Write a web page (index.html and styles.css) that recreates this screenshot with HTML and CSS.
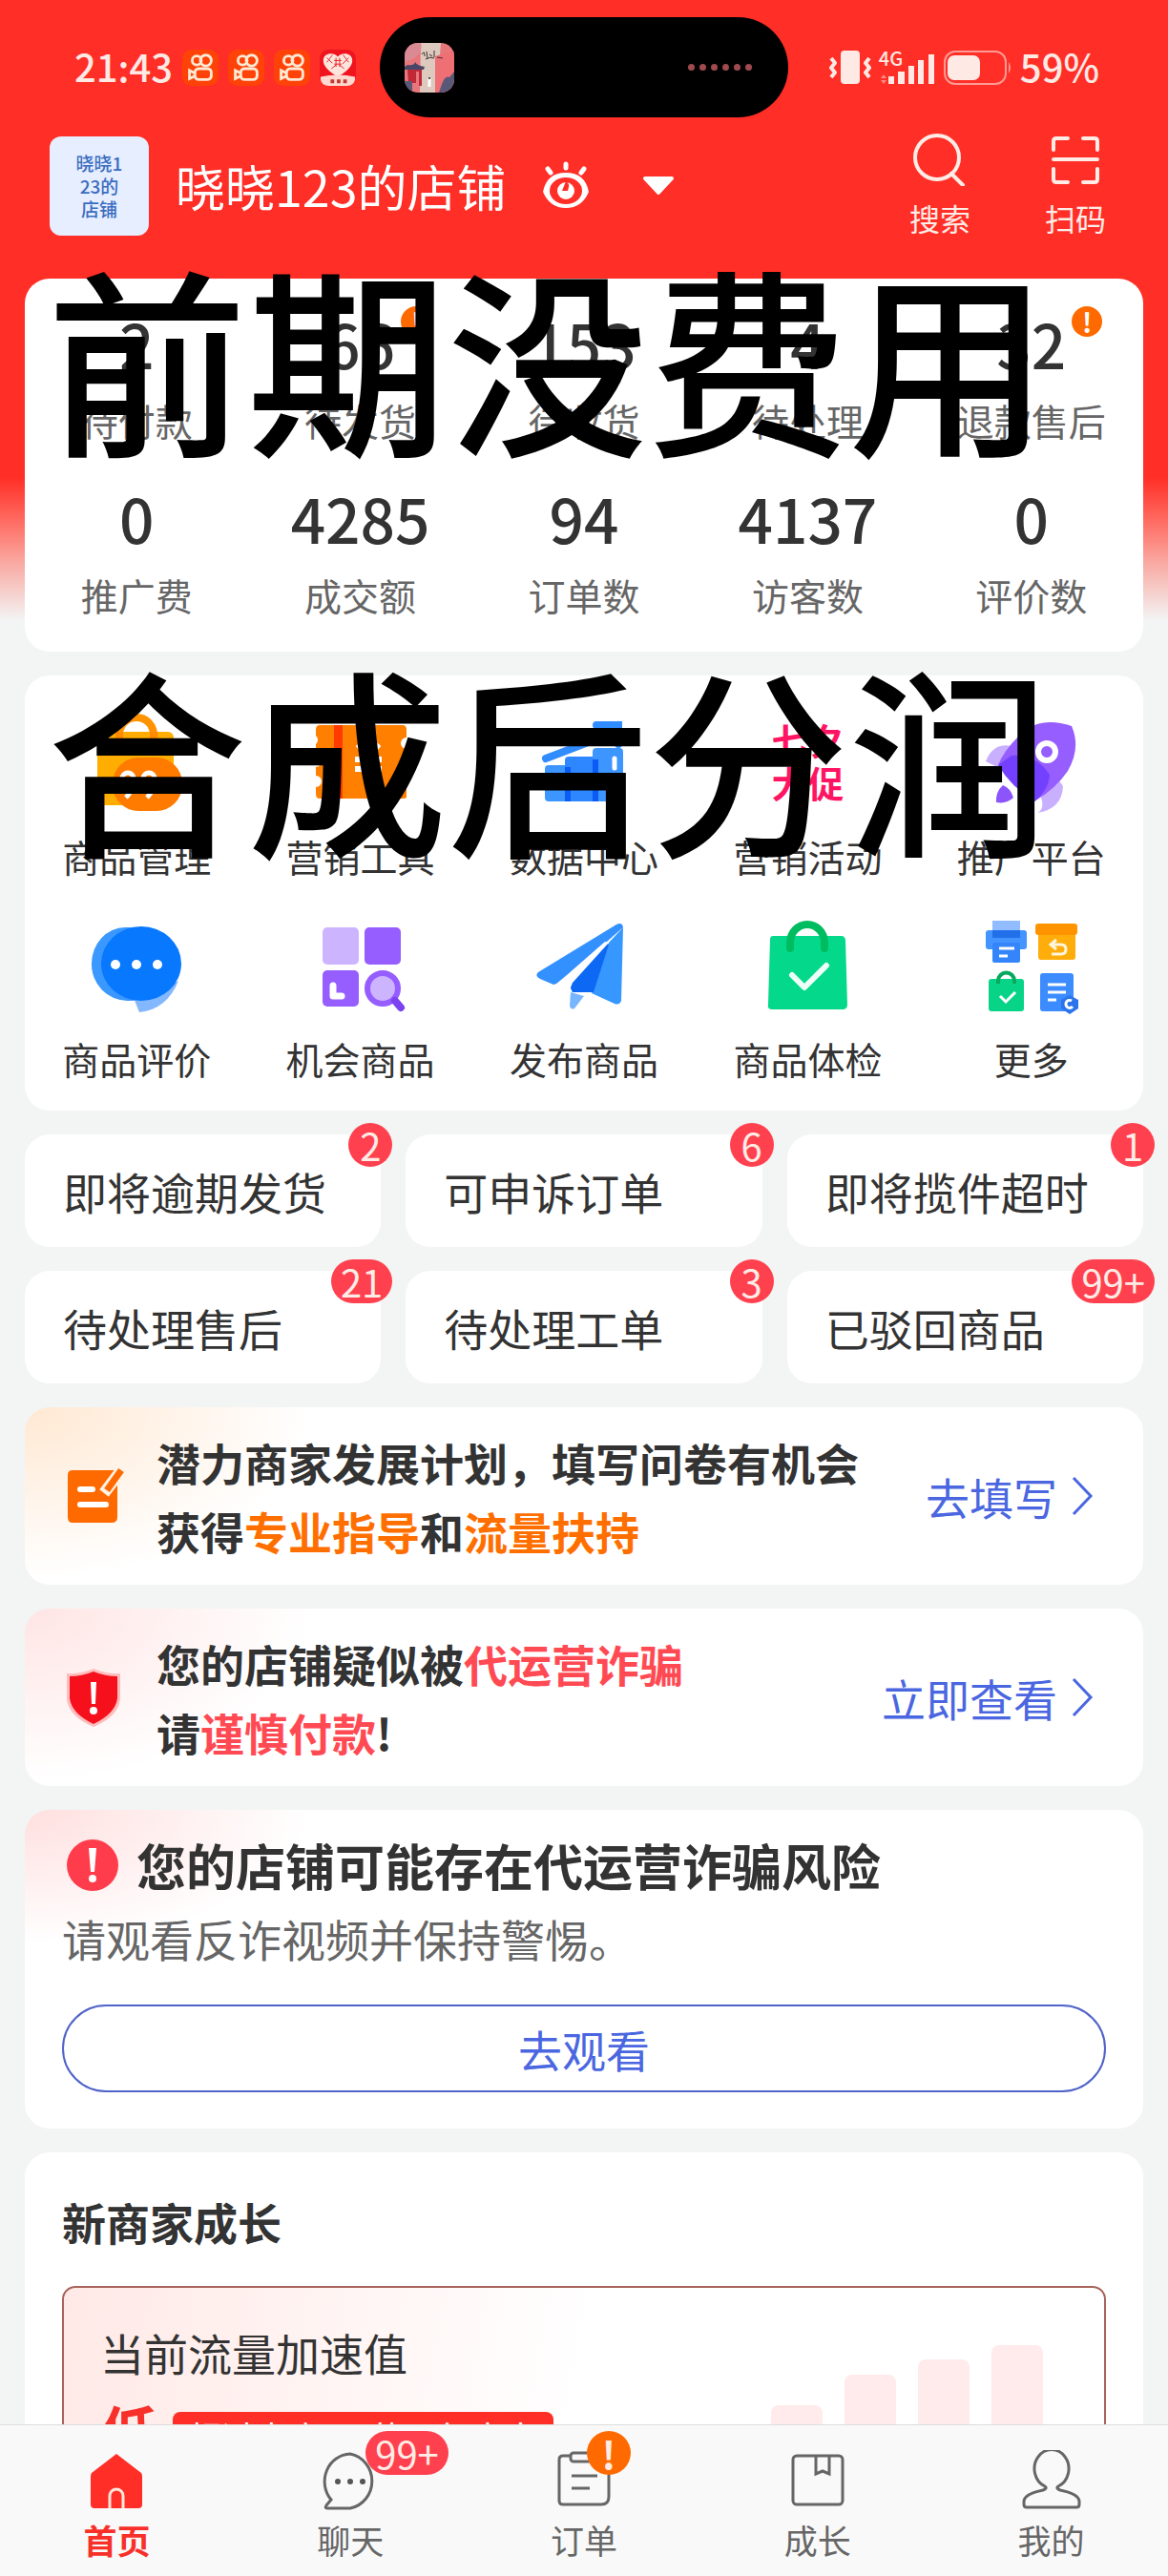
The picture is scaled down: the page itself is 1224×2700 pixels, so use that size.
FILE: index.html
```html
<!DOCTYPE html>
<html lang="zh-CN">
<head>
  <meta charset="UTF-8">
  <meta name="viewport" content="width=device-width, initial-scale=1.0">
  <title>晓晓123的店铺</title>
  <link rel="stylesheet" href="styles.css">
</head>
<body>
  <div class="screen">
    <div class="content">

      <!-- phone status bar -->
      <div class="status-bar">
        <div class="status-left">
          <span class="status-text">21:43</span>
          <svg class="app-icon" viewBox="0 0 40 40"><rect width="40" height="40" rx="10" fill="#ff4208"/><g fill="none" stroke="#ffe9d2" stroke-width="3"><circle cx="16" cy="12" r="5"/><circle cx="26" cy="12" r="6"/><rect x="14" y="21" width="18" height="12" rx="4"/><path d="M14 26l-6-3v9l6-3"/></g></svg>
          <svg class="app-icon" viewBox="0 0 40 40"><rect width="40" height="40" rx="10" fill="#ff4208"/><g fill="none" stroke="#ffe9d2" stroke-width="3"><circle cx="16" cy="12" r="5"/><circle cx="26" cy="12" r="6"/><rect x="14" y="21" width="18" height="12" rx="4"/><path d="M14 26l-6-3v9l6-3"/></g></svg>
          <svg class="app-icon" viewBox="0 0 40 40"><rect width="40" height="40" rx="10" fill="#ff4208"/><g fill="none" stroke="#ffe9d2" stroke-width="3"><circle cx="16" cy="12" r="5"/><circle cx="26" cy="12" r="6"/><rect x="14" y="21" width="18" height="12" rx="4"/><path d="M14 26l-6-3v9l6-3"/></g></svg>
          <svg class="app-icon" viewBox="0 0 40 40"><rect width="40" height="40" rx="10" fill="#f0141e"/><path d="M20 30C10 24 4 18 4 12C4 4 15 2 20 8C25 2 36 4 36 12C36 18 30 24 20 30Z" fill="#ffe6dc"/><path d="M8 9l6 6M14 6l-6 8M26 6l6 8M32 9l-7 7M13 21l5-4M27 21l-5-4M16 12h8M16 16h8M18 9v10M22 9v10" stroke="#e8202a" stroke-width="1"/><path d="M1 30Q20 26 39 30V33Q38 40 30 40H10Q2 40 1 33Z" fill="#ffd9cf"/><path d="M12 33h4v4h-4zM19 33h4v4h-4zM26 33h4v4h-4z" fill="#c23a34"/></svg>
        </div>
        <div class="island">
          <svg class="island-cover" viewBox="0 0 52 52">
            <defs><clipPath id="cover"><rect width="52" height="52" rx="14"/></clipPath></defs>
            <g clip-path="url(#cover)">
              <rect width="52" height="52" fill="#e8777c"/>
              <path d="M17 0H38L34 52H16Z" fill="#ddc9bd"/>
              <path d="M0 0H17Q20 10 8 17L0 20Z" fill="#d98a92"/>
              <path d="M32 14L52 8V52H32Z" fill="#ee6f74"/>
              <path d="M0 25L3 23Q10 24 11 20Q13 24 21 25L20 28H0Z" fill="#4a4668"/>
              <path d="M3 28H18V45H15V30H12V42H4Z" fill="#c02838"/>
              <path d="M0 40H8V52H0ZM38 46Q42 33 47 36L52 30V52H36Z" fill="#5a5878"/>
              <path d="M18 12q3-5 3 2M23 9l1 7M26 12l3 2M31 8v7M22 17q5-3 9-1M34 15l6 1" fill="none" stroke="#3a3434" stroke-width="1"/>
              <path d="M26 37v9" stroke="#fff" stroke-width="3"/><circle cx="26" cy="37" r="1" fill="#222"/>
            </g>
          </svg>
          <div class="island-dots"><i></i><i></i><i></i><i></i><i></i><i></i></div>
        </div>
        <div class="status-right">
          <svg class="vibrate-icon" viewBox="0 0 44 36"><rect x="12" y="0" width="20" height="35" rx="4" fill="#ffe9e4"/><path d="M2 8l4 5-4 5 4 5-4 5M42 8l-4 5 4 5-4 5 4 5" fill="none" stroke="#ffe9e4" stroke-width="4" stroke-linejoin="round"/></svg>
          <div class="signal">
            <span class="signal-type">4G</span>
            <svg class="signal-icon" viewBox="0 0 60 36"><path d="M10 27h6v8h-6zM20 22h7v13h-7zM31 16h6v19h-6zM41 10h6v25h-6zM52 4h6v31h-6z" fill="#ffe9e4"/><path d="M2 29l3-4 3 4zM2 31l3 4 3-4z" fill="#ff8c84"/></svg>
          </div>
          <svg class="battery-icon" viewBox="0 0 72 36"><rect x="1" y="1" width="64" height="34" rx="11" fill="none" stroke="#ff9a94" stroke-width="2"/><rect x="4" y="5" width="34" height="26" rx="7" fill="#ffe9e4"/><path d="M68 12q4 6 0 12z" fill="#ff9a94"/></svg>
          <span class="status-text">59%</span>
        </div>
      </div>

      <header class="shop-header">
        <div class="shop-logo">晓晓1<br>23的<br>店铺</div>
        <h1 class="shop-name">晓晓123的店铺</h1>
        <button class="icon-button" aria-label="隐藏数据">
          <svg class="eye-icon" viewBox="0 0 52 52"><path d="M2 32Q6 12 26 12T50 32Q43 49 26 49T2 32Z" fill="#fff"/><ellipse cx="26" cy="31" rx="17" ry="14" fill="#ff2e26"/><circle cx="26" cy="31" r="9" fill="#fff"/><path d="M26 21q5 2 2 10h-6z" fill="#ff2e26"/><path d="M26 3v4M7 8l3 4M45 8l-3 4" stroke="#fff" stroke-width="5" stroke-linecap="round"/></svg>
        </button>
        <button class="icon-button" aria-label="切换店铺">
          <svg class="caret-icon" viewBox="0 0 34 22"><path d="M3 3H31L17 18Z" fill="#fff" stroke="#fff" stroke-width="4" stroke-linejoin="round"/></svg>
        </button>
        <div class="header-actions">
          <button class="header-action">
            <svg viewBox="0 0 56 56"><circle cx="25" cy="26" r="23" fill="none" stroke="#ffece6" stroke-width="4"/><path d="M40 43L52 55" stroke="#ffece6" stroke-width="4" stroke-linecap="round"/></svg>
            搜索
          </button>
          <button class="header-action">
            <svg viewBox="0 0 56 56"><path d="M5 18V9Q5 6 8 6H20M36 6H48Q51 6 51 9V18M5 28H51M5 38V49Q5 52 8 52H20M36 52H48Q51 52 51 49V38" fill="none" stroke="#ffece6" stroke-width="4" stroke-linecap="round"/></svg>
            扫码
          </button>
        </div>
      </header>

      <main class="cards">
        <section class="card stats">
          <a href="#" class="stat"><span class="stat-number">2</span>待付款</a>
          <a href="#" class="stat"><span class="stat-number">66<b class="alert-dot">!</b></span>待发货</a>
          <a href="#" class="stat"><span class="stat-number">153</span>待收货</a>
          <a href="#" class="stat"><span class="stat-number">4</span>待处理</a>
          <a href="#" class="stat"><span class="stat-number">32<b class="alert-dot">!</b></span>退款售后</a>
          <a href="#" class="stat"><span class="stat-number">0</span>推广费</a>
          <a href="#" class="stat"><span class="stat-number">4285</span>成交额</a>
          <a href="#" class="stat"><span class="stat-number">94</span>订单数</a>
          <a href="#" class="stat"><span class="stat-number">4137</span>访客数</a>
          <a href="#" class="stat"><span class="stat-number">0</span>评价数</a>
        </section>

        <section class="card tools">
          <a href="#" class="tool">
            <svg class="tool-icon" viewBox="0 0 104 104"><path d="M34 28V22a18 18 0 0 1 36 0V28" fill="none" stroke="#ff9200" stroke-width="8"/><rect x="11" y="19" width="80" height="77" rx="6" fill="#ffad00"/><path d="M34 19V26M70 19V26" stroke="#ff8a00" stroke-width="8"/><rect x="27" y="46" width="73" height="56" rx="27" fill="#ff7b00"/><g fill="none" stroke="#fff" stroke-width="5"><circle cx="43" cy="68" r="6"/><path d="M49 68q0 12-8 20"/><circle cx="65" cy="68" r="6"/><path d="M71 68q0 12-8 20M80 78h12M86 72v12"/></g></svg>
            商品管理
          </a>
          <a href="#" class="tool">
            <svg class="tool-icon" viewBox="0 0 104 104"><path d="M9 12H96Q100 12 100 17V25a6 6 0 0 0 0 12V87Q100 89 96 89H9Q5 89 5 84V77a6 6 0 0 0 0-12V56a6 6 0 0 0 0-12V32a6 6 0 0 0 0-9V17Q5 12 9 12Z" fill="#ff8000"/><path d="M24 12h9v77h-9z" fill="#ff3b00"/><path d="M49 32L60 45L71 32M60 45V68M46 48H74M46 58H74" fill="none" stroke="#fff" stroke-width="6"/></svg>
            营销工具
          </a>
          <a href="#" class="tool">
            <svg class="tool-icon" viewBox="0 0 104 104"><path d="M12 47L62 28L88 12M65 12H88V32" fill="none" stroke="#318cff" stroke-width="8" stroke-linecap="round"/><rect x="11" y="54" width="28" height="38" rx="4" fill="#3d95ff"/><rect x="32" y="45" width="35" height="47" rx="4" fill="#2e87ff"/><rect x="61" y="36" width="32" height="56" rx="4" fill="#3d95ff"/><path d="M32 56h6v36h-6zM61 48h6v44h-6z" fill="#0a5cf5"/><path d="M84 47v10" stroke="#fff" stroke-width="5" stroke-linecap="round"/></svg>
            数据中心
          </a>
          <a href="#" class="tool">
            <span class="tool-icon promo">七夕<br>大促</span>
            营销活动
          </a>
          <a href="#" class="tool">
            <svg class="tool-icon" viewBox="0 0 104 104"><path d="M31 34Q12 30 4 50L24 60ZM62 88Q66 100 58 104Q84 100 85 76L78 66Z" fill="#c9b0ff"/><path d="M94 13Q60 2 40 22Q22 40 17 54Q38 78 55 92Q78 78 90 60Q104 36 94 13Z" fill="#965dff"/><path d="M31 44Q56 42 71 64Q70 80 55 92Q30 76 17 54Z" fill="#7440ff"/><circle cx="68" cy="40" r="9" fill="none" stroke="#fff" stroke-width="6"/><path d="M22 75Q14 82 15 93Q26 95 33 88Q30 78 22 75Z" fill="#8b55fb"/></svg>
            推广平台
          </a>
          <a href="#" class="tool">
            <svg class="tool-icon" viewBox="0 0 104 104"><path d="M45 12H40a35 38 0 0 0-35 38a38 38 0 0 0 38 39Q60 89 70 84L60 12Z" fill="#3b98ff"/><path d="M49 86L55 101Q84 98 96 68L70 80Z" fill="#83b8ff"/><ellipse cx="57" cy="50" rx="42" ry="39" fill="#0878ff"/><g fill="#fff"><circle cx="30" cy="51" r="5"/><circle cx="52" cy="51" r="5"/><circle cx="74" cy="51" r="5"/></g></svg>
            商品评价
          </a>
          <a href="#" class="tool">
            <svg class="tool-icon" viewBox="0 0 104 104"><rect x="12" y="12" width="38" height="39" rx="5" fill="#cdb4ff"/><rect x="56" y="12" width="38" height="39" rx="5" fill="#965dff"/><rect x="12" y="57" width="38" height="38" rx="5" fill="#965dff"/><path d="M23 73v11h9" fill="none" stroke="#fff" stroke-width="7" stroke-linecap="round" stroke-linejoin="round"/><circle cx="75" cy="76" r="16" fill="#cdb4ff" stroke="#965dff" stroke-width="6"/><path d="M88 89l6 7" stroke="#7a43ef" stroke-width="8" stroke-linecap="round"/></svg>
            机会商品
          </a>
          <a href="#" class="tool">
            <svg class="tool-icon" viewBox="0 0 104 104"><path d="M38 80L52 84L42 97Q38 99 37 94Z" fill="#78b5ff"/><path d="M4 59L86 9Q92 6 93 12L27 70L20 72L6 66Q0 63 4 59Z" fill="#3391ff"/><path d="M93 12L91 89Q89 94 84 92L60 81L78 28Z" fill="#3697ff"/><path d="M38 66L76 28L78 30L62 80L40 80Q36 74 38 66Z" fill="#0d69f4"/><path d="M22 72L34 62L74 27L78 28L40 70L36 80Z" fill="#fff"/></svg>
            发布商品
          </a>
          <a href="#" class="tool">
            <svg class="tool-icon" viewBox="0 0 104 104"><path d="M16 21H88Q91 21 92 25L94 93Q94 98 89 98H15Q10 98 11 93L13 25Q13 21 16 21Z" fill="#04d98b"/><path d="M34 34V28a18 19 0 0 1 36 0V34" fill="none" stroke="#00bc60" stroke-width="8" stroke-linecap="round"/><path d="M36 62L49 75L72 52" fill="none" stroke="#edfff8" stroke-width="6" stroke-linecap="round" stroke-linejoin="round"/></svg>
            商品体检
          </a>
          <a href="#" class="tool">
            <svg class="tool-icon" viewBox="0 0 104 104"><rect x="11" y="5" width="29" height="17" fill="#91bcff"/><rect x="4" y="15" width="43" height="20" rx="3" fill="#4394ff"/><rect x="11" y="15" width="29" height="8" fill="#2170ea"/><rect x="11" y="28" width="29" height="21" rx="2" fill="#3485fa"/><path d="M18 34h16M18 42h9" stroke="#fff" stroke-width="3"/><rect x="59" y="13" width="39" height="33" rx="3" fill="#ffad0a"/><rect x="56" y="8" width="44" height="12" rx="3" fill="#ff9400"/><path d="M74 30h9q5 0 5 5t-5 5h-10M78 25l-6 5 6 5" fill="none" stroke="#fff6dd" stroke-width="3"/><rect x="7" y="66" width="37" height="34" rx="3" fill="#08d488"/><path d="M17 71v-3a8 8 0 0 1 17 0v3" fill="none" stroke="#04a95e" stroke-width="4"/><path d="M19 84l6 6 10-10" fill="none" stroke="#fff" stroke-width="3"/><rect x="61" y="60" width="35" height="40" rx="3" fill="#3c8cff"/><path d="M69 72h19M69 80h19M69 88h9" stroke="#fff" stroke-width="3"/><path d="M92 83l9 5v9l-9 6-9-6v-9z" fill="#2b74ec"/><path d="M94 89a4 4 0 1 0 1 6" fill="none" stroke="#fff" stroke-width="3"/></svg>
            更多
          </a>
        </section>

        <section class="todos">
          <a href="#" class="todo">即将逾期发货<span class="badge">2</span></a>
          <a href="#" class="todo">可申诉订单<span class="badge">6</span></a>
          <a href="#" class="todo">即将揽件超时<span class="badge">1</span></a>
          <a href="#" class="todo">待处理售后<span class="badge">21</span></a>
          <a href="#" class="todo">待处理工单<span class="badge">3</span></a>
          <a href="#" class="todo">已驳回商品<span class="badge">99+</span></a>
        </section>

        <section class="card notice notice-orange">
          <svg class="notice-icon" viewBox="0 0 64 64"><path d="M10 5H57V54Q57 60 51 60H10Q5 60 5 54V10Q5 5 10 5Z" fill="#ff6a00"/><path d="M62 4L43 29" stroke="#fff3e6" stroke-width="12"/><path d="M61 5L46 26" stroke="#ff6a00" stroke-width="7"/><path d="M18 25h13M18 41h27" stroke="#fff" stroke-width="6" stroke-linecap="round"/></svg>
          <p class="notice-text">潜力商家发展计划，填写问卷有机会<br>获得<em>专业指导</em>和<em>流量扶持</em></p>
          <a href="#" class="notice-link">去填写<svg viewBox="0 0 24 44"><path d="M3 3L21 22L3 41" fill="none" stroke="currentColor" stroke-width="3"/></svg></a>
        </section>

        <section class="card notice notice-red">
          <svg class="notice-icon" viewBox="0 0 64 64"><path d="M32 2Q46 8 60 7V34Q58 52 32 63Q6 52 4 34V7Q18 8 32 2Z" fill="#ffbcbc"/><path d="M32 5Q44 10 57 10V33Q55 49 32 60Q9 49 7 33V10Q20 10 32 5Z" fill="#f5101c"/><path d="M29 16h6l-1 23h-4z" fill="#fff"/><circle cx="32" cy="46" r="4" fill="#fff"/></svg>
          <p class="notice-text">您的店铺疑似被<em>代运营诈骗</em><br>请<em>谨慎付款</em>!</p>
          <a href="#" class="notice-link">立即查看<svg viewBox="0 0 24 44"><path d="M3 3L21 22L3 41" fill="none" stroke="currentColor" stroke-width="3"/></svg></a>
        </section>

        <section class="card warning">
          <h2 class="warning-title">
            <svg viewBox="0 0 64 64"><circle cx="32" cy="32" r="27" fill="#ff3c4b"/><path d="M28 14h8l-2 25h-4z" fill="#fff"/><circle cx="32" cy="46" r="4" fill="#fff"/></svg>
            您的店铺可能存在代运营诈骗风险
          </h2>
          <p class="warning-text">请观看反诈视频并保持警惕。</p>
          <button class="watch-button">去观看</button>
        </section>

        <section class="card growth">
          <h2 class="growth-title">新商家成长</h2>
          <div class="growth-box">
            <div class="growth-info">
              <p class="growth-label">当前流量加速值</p>
              <div class="growth-level"><strong>低</strong><span>超过本店0%的同行商家</span></div>
            </div>
            <div class="growth-bars"><i></i><i></i><i></i><i></i></div>
          </div>
        </section>
      </main>
    </div>

    <nav class="tab-bar">
      <a href="#" class="tab active">
        <span class="tab-icon"><svg viewBox="0 0 64 64"><path d="M32 4L58 24Q59 25 59 28V57Q59 61 55 61H9Q5 61 5 57V28Q5 25 6 24Z" fill="#ff2e26"/><path d="M25 61V48a7 7 0 0 1 14 0V61" fill="none" stroke="#ffe6dc" stroke-width="3"/></svg></span>
        首页
      </a>
      <a href="#" class="tab">
        <span class="tab-icon"><svg viewBox="0 0 64 64"><path d="M32 4a28 29 0 0 1 0 57H8Q5 61 7 58L12 52A28 29 0 0 1 32 4Z" fill="none" stroke="#666" stroke-width="3"/><g fill="#555"><circle cx="19" cy="33" r="3"/><circle cx="32" cy="33" r="3"/><circle cx="45" cy="33" r="3"/></g></svg><span class="badge">99+</span></span>
        聊天
      </a>
      <a href="#" class="tab">
        <span class="tab-icon"><svg viewBox="0 0 64 64"><path d="M18 6H10Q6 6 6 10V53Q6 57 10 57H50Q58 57 58 49V10Q58 6 54 6H46" fill="none" stroke="#666" stroke-width="3"/><rect x="18" y="3" width="28" height="9" rx="3" fill="none" stroke="#666" stroke-width="3"/><path d="M19 27H46M19 40H38" stroke="#666" stroke-width="3"/></svg><span class="badge badge-orange">!</span></span>
        订单
      </a>
      <a href="#" class="tab">
        <span class="tab-icon"><svg viewBox="0 0 64 64"><rect x="6" y="6" width="52" height="51" rx="4" fill="none" stroke="#666" stroke-width="3"/><path d="M30 6V25L37 22L44 25V6" fill="none" stroke="#666" stroke-width="3"/></svg></span>
        成长
      </a>
      <a href="#" class="tab">
        <span class="tab-icon"><svg viewBox="0 0 64 64"><path d="M25 38A18 20 0 1 1 39 38Q36 40 41 42Q61 46 61 54V57Q61 60 58 60H6Q3 60 3 57V54Q3 46 23 42Q28 40 25 38Z" fill="none" stroke="#666" stroke-width="3"/></svg></span>
        我的
      </a>
    </nav>

    <p class="caption">前期没费用<br>合成后分润</p>
  </div>
</body>
</html>
```
FILE: styles.css
```css
* {
  box-sizing: border-box;
}

body {
  margin: 0;
  font-family: "Noto Sans CJK SC", "Noto Sans", sans-serif;
  color: #333;
  background-color: #f3f4f4;
}

h1, h2, p {
  margin: 0;
}

a {
  color: inherit;
  text-decoration: none;
}

button {
  padding: 0;
  border: none;
  background: none;
  font-family: inherit;
  color: inherit;
  cursor: pointer;
}

svg {
  display: block;
  flex-shrink: 0;
}

.screen {
  position: relative;
  display: flex;
  flex-direction: column;
  height: 100vh;
  overflow: hidden;
}

.content {
  flex: 1;
  min-height: 0;
  overflow: hidden;
  background: linear-gradient(#ff2e26 500px, #ff6a60 545px, #f9a9a2 590px, #f3f4f4 650px);
}

/* status bar */
.status-bar {
  display: grid;
  grid-template-columns: 1fr 428px 1fr;
  align-items: center;
  padding-top: 18px;
}

.status-left,
.status-right {
  display: flex;
  align-items: center;
  gap: 10px;
}

.status-left {
  padding-left: 78px;
}

.status-right {
  justify-content: flex-end;
  gap: 8px;
  padding-right: 72px;
}

.status-text {
  padding-bottom: 4px;
  font-size: 40px;
  line-height: 44px;
  font-weight: 500;
  color: #ffe9e4;
}

.app-icon {
  width: 38px;
  height: 38px;
}

.island {
  display: flex;
  align-items: center;
  justify-content: space-between;
  height: 105px;
  padding: 0 38px 0 26px;
  border-radius: 53px;
  background-color: #000;
}

.island-cover {
  width: 52px;
  height: 52px;
}

.island-dots {
  display: flex;
  gap: 5px;
}

.island-dots i {
  width: 7px;
  height: 7px;
  border-radius: 50%;
  background-color: #a04a50;
}

.vibrate-icon {
  width: 44px;
  height: 36px;
}

.signal {
  position: relative;
}

.signal-type {
  position: absolute;
  left: 0;
  top: -4px;
  font-size: 20px;
  line-height: 24px;
  font-weight: 500;
  color: #ffe9e4;
}

.signal-icon {
  width: 60px;
  height: 36px;
}

.battery-icon {
  width: 72px;
  height: 36px;
}

/* shop header */
.shop-header {
  display: flex;
  align-items: center;
  padding: 16px 52px 42px;
  color: #fff;
}

.shop-logo {
  display: flex;
  align-items: center;
  justify-content: center;
  width: 104px;
  height: 104px;
  border-radius: 12px;
  background-color: #e6eeff;
  color: #3a6cc0;
  font-size: 19px;
  line-height: 24px;
  font-weight: 500;
  text-align: center;
}

.shop-name {
  margin-left: 28px;
  font-size: 52px;
  line-height: 64px;
  font-weight: 400;
}

.icon-button {
  margin-left: 36px;
}

.icon-button + .icon-button {
  margin-left: 54px;
}

.eye-icon {
  width: 52px;
  height: 52px;
}

.caret-icon {
  width: 34px;
  height: 22px;
}

.header-actions {
  display: flex;
  gap: 78px;
  margin-left: auto;
  padding-right: 13px;
}

.header-action {
  display: flex;
  flex-direction: column;
  align-items: center;
  gap: 11px;
  font-size: 32px;
  line-height: 44px;
  color: #ffece6;
}

.header-action svg {
  width: 56px;
  height: 56px;
}

/* cards */
.cards {
  display: flex;
  flex-direction: column;
  gap: 25px;
  padding: 0 26px;
}

.card {
  border-radius: 26px;
  background-color: #fff;
}

.stats {
  display: grid;
  grid-template-columns: repeat(5, 1fr);
  row-gap: 30px;
  padding: 25px 0 30px;
}

.stat {
  display: flex;
  flex-direction: column;
  align-items: center;
  gap: 9px;
  font-size: 39px;
  line-height: 60px;
  color: #666;
}

.stat-number {
  position: relative;
  font-size: 64px;
  line-height: 84px;
  font-weight: 500;
  color: #333;
}

.alert-dot {
  position: absolute;
  left: 100%;
  top: 4px;
  width: 32px;
  height: 32px;
  margin-left: 6px;
  border-radius: 50%;
  background-color: #ff6a00;
  color: #fff;
  font-size: 28px;
  line-height: 32px;
  text-align: center;
}

.tools {
  display: grid;
  grid-template-columns: repeat(5, 1fr);
  row-gap: 33px;
  padding: 40px 0 25px;
}

.tool {
  display: flex;
  flex-direction: column;
  align-items: center;
  gap: 15px;
  font-size: 39px;
  line-height: 60px;
}

.tool-icon {
  width: 104px;
  height: 104px;
}

.promo {
  padding-top: 4px;
  color: #ff1464;
  font-size: 38px;
  line-height: 45px;
  font-weight: 700;
  text-align: center;
}

/* to-do buttons */
.todos {
  display: grid;
  grid-template-columns: repeat(3, 1fr);
  gap: 25px 26px;
}

.todo {
  position: relative;
  padding: 29px 40px;
  border-radius: 26px;
  background-color: #fff;
  font-size: 46px;
  line-height: 60px;
}

.badge {
  position: absolute;
  top: -12px;
  right: -12px;
  min-width: 46px;
  padding: 0 10px;
  border-radius: 23px;
  background-color: #ff404e;
  color: #ffece6;
  font-size: 40px;
  line-height: 46px;
  text-align: center;
}

/* notices */
.notice {
  display: flex;
  align-items: center;
  padding: 21px 52px 21px 40px;
}

.notice-orange {
  background: radial-gradient(ellipse 300px 180px at 0 0, #ffe8d2, #fff);
}

.notice-red {
  background: radial-gradient(ellipse 300px 180px at 0 0, #ffe4e4, #fff);
}

.notice-icon {
  width: 64px;
  height: 64px;
  margin-right: 34px;
}

.notice-text {
  flex: 1;
  font-size: 46px;
  line-height: 72px;
  font-weight: 700;
}

.notice-text em {
  font-style: normal;
}

.notice-orange em {
  color: #ff6f00;
}

.notice-red em {
  color: #ff4a54;
}

.notice-link {
  display: flex;
  align-items: center;
  gap: 14px;
  font-size: 46px;
  line-height: 60px;
  color: #4a66e0;
}

.notice-link svg {
  width: 24px;
  height: 44px;
}

/* fraud warning */
.warning {
  padding: 22px 39px 38px;
  background: radial-gradient(ellipse 300px 140px at 0 0, #ffdfdf, #fff);
}

.warning-title {
  display: flex;
  align-items: center;
  gap: 14px;
  font-size: 52px;
  line-height: 72px;
  font-weight: 700;
}

.warning-title svg {
  width: 64px;
  height: 64px;
}

.warning-text {
  margin-top: 4px;
  font-size: 46px;
  line-height: 72px;
  color: #666;
}

.watch-button {
  width: 100%;
  margin-top: 34px;
  border: 2px solid #5063c8;
  border-radius: 46px;
  font-size: 46px;
  line-height: 88px;
  color: #4a66e0;
}

/* merchant growth */
.growth {
  padding: 36px 39px;
}

.growth-title {
  font-size: 46px;
  line-height: 72px;
  font-weight: 700;
}

.growth-box {
  display: flex;
  justify-content: space-between;
  margin-top: 32px;
  padding: 31px 64px 34px 38px;
  border: 2px solid #a8645c;
  border-radius: 14px;
  background: linear-gradient(100deg, #ffe9e6, #fff 50%);
}

.growth-label {
  font-size: 46px;
  line-height: 72px;
}

.growth-level {
  display: flex;
  align-items: flex-start;
  gap: 16px;
  margin-top: 10px;
}

.growth-level strong {
  font-size: 60px;
  line-height: 72px;
  color: #f8302a;
}

.growth-level span {
  margin-top: 17px;
  padding: 0 16px;
  border-radius: 8px;
  background-color: #ff2e26;
  color: #fff;
  font-size: 35px;
  line-height: 52px;
}

.growth-bars {
  display: flex;
  align-items: flex-end;
  gap: 23px;
  padding-top: 29px;
}

.growth-bars i {
  width: 54px;
  height: 100%;
  border-radius: 8px 8px 0 0;
  background-color: #ffebeb;
}

.growth-bars i:nth-child(1) {
  height: 50%;
}

.growth-bars i:nth-child(2) {
  height: 75%;
}

.growth-bars i:nth-child(3) {
  height: 88%;
}

/* bottom tabs */
.tab-bar {
  display: grid;
  grid-template-columns: repeat(5, 1fr);
  padding: 26px 0 12px;
  border-top: 1px solid #ddd;
  background-color: #f9f9f9;
}

.tab {
  display: flex;
  flex-direction: column;
  align-items: center;
  gap: 4px;
  font-size: 35px;
  line-height: 52px;
  color: #666;
}

.tab.active {
  color: #f8302a;
  font-weight: 700;
}

.tab-icon {
  position: relative;
}

.tab-icon svg {
  width: 64px;
  height: 64px;
}

.tab-icon .badge {
  top: -20px;
  left: 48px;
  right: auto;
}

.tab-icon .badge-orange {
  left: 35px;
  background-color: #ff6a00;
  font-weight: 700;
}

/* large caption laid over the page */
.caption {
  position: absolute;
  left: 49px;
  top: 161px;
  font-size: 210px;
  line-height: 420px;
  font-weight: 500;
  white-space: nowrap;
  color: #000;
  pointer-events: none;
}
```
